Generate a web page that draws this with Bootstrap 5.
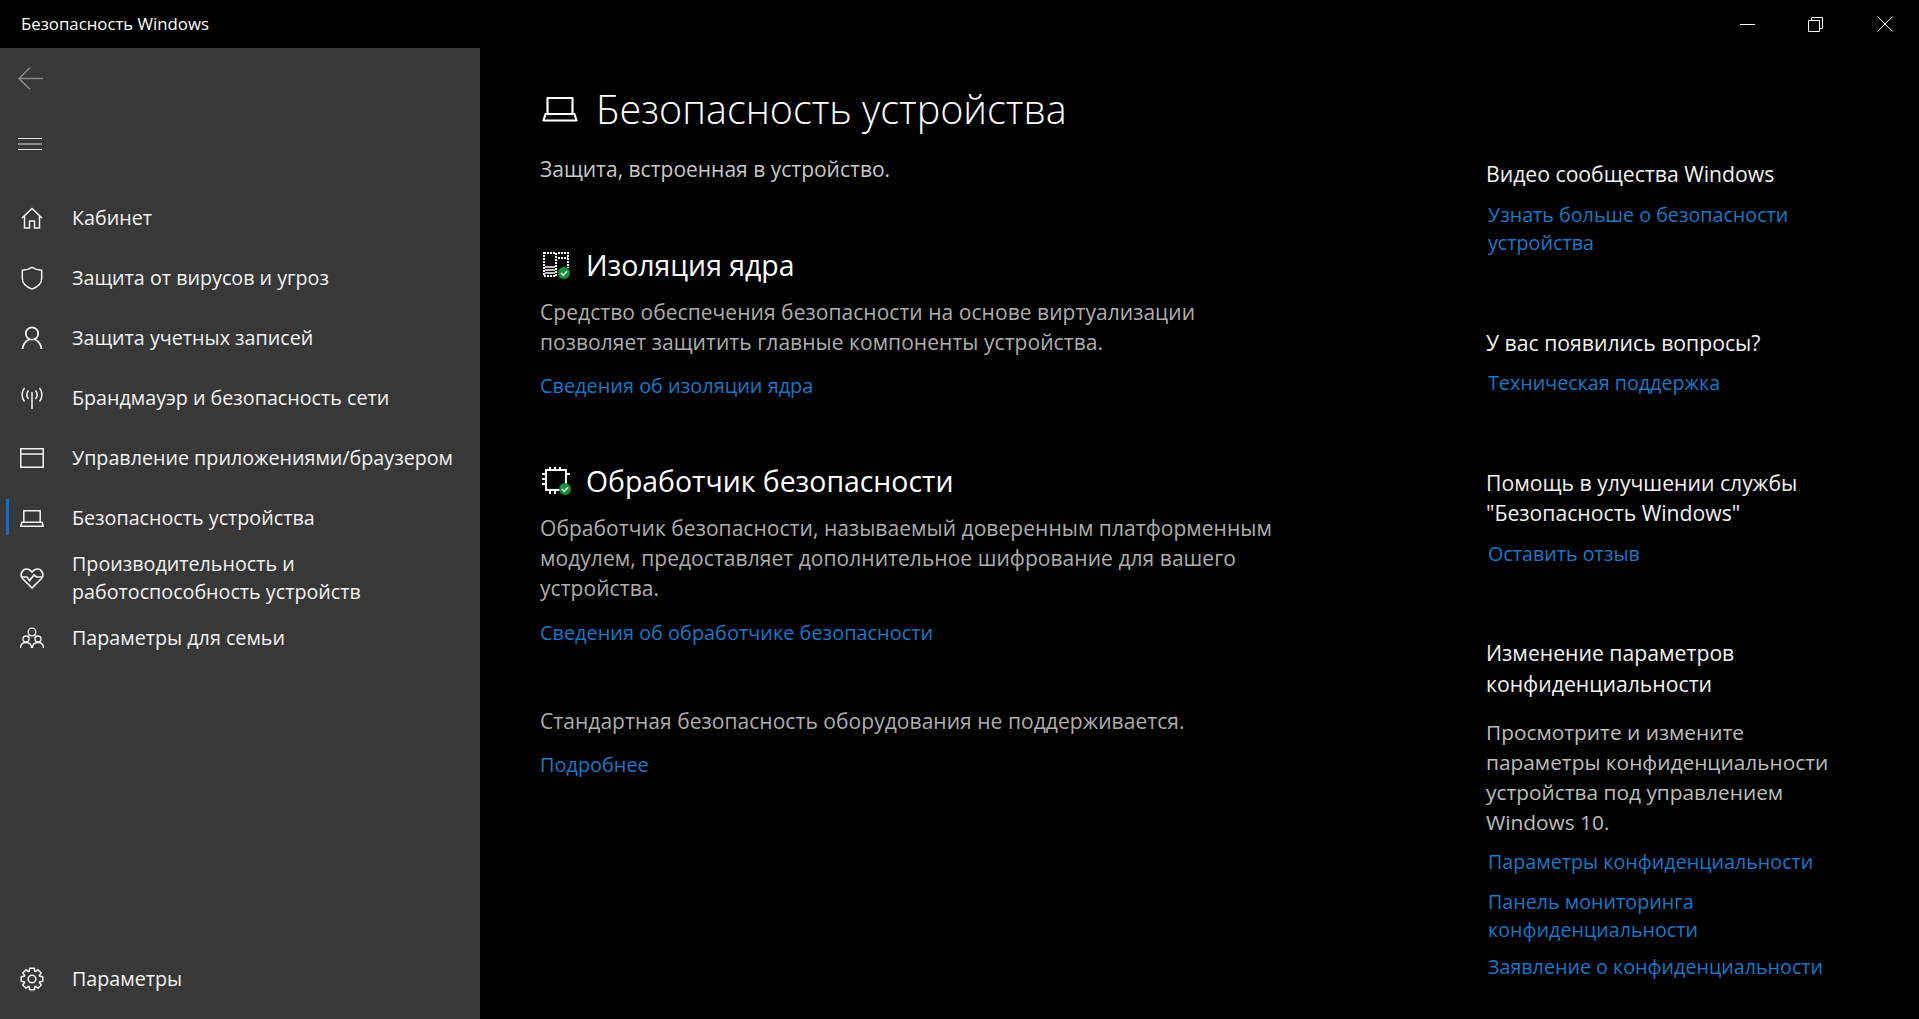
<!DOCTYPE html>
<html lang="ru">
  <head>
    <meta charset="UTF-8" />
    <title>Безопасность Windows</title>
    <link href="https://cdn.jsdelivr.net/npm/bootstrap@5.3.3/dist/css/bootstrap.min.css" rel="stylesheet"/>
    <style>
      html, body { height: 100%; }
      body {
        background: #000;
        color: #fff;
        font-family: "Open Sans", "Noto Sans", sans-serif;
        overflow: hidden;
      }
      a { text-decoration: none; }
      .app-shell { height: 1019px; }
      .title-bar { height: 48px; background: #000; font-size: 16.8px; padding-left: 21px; }
      .win-btn { width: 69px; height: 48px; }
      .side-pane { width: 480px; background: #383838; flex-shrink: 0; height: 971px; }
      .side-top { height: 140px; padding: 17px 0 0 18px; }
      .back-row { height: 65px; }
      .nav-item-row {
        height: 60px;
        color: #f2f2f2;
        font-size: 19.7px;
        line-height: 28px;
        padding: 0 0 0 20px;
        position: relative;
      }
      .nav-item-row.is-active::before {
        content: "";
        position: absolute;
        left: 6px; top: 11px;
        width: 3px; height: 36px;
        background: #0b6fce;
      }
      .nav-ico { width: 24px; margin-right: 28px; flex-shrink: 0; }
      .side-bottom { height: 76px; margin-top: auto; padding-bottom: 4px; }
      .main-pane { width: 1000px; padding: 37px 0 0 60px; flex-shrink: 0; }
      .title-ico { margin: 0 18px 0 2px; }
      .page-title { font-size: 39.5px; font-weight: 300; line-height: 48px; margin: 0; }
      .page-sub { font-size: 21px; color: #c8c8c8; margin: 21px 0 63px; line-height: 30px; }
      .sec-ico { margin: 0 14px 0 2px; }
      .sec-title { font-size: 28.4px; font-weight: 400; line-height: 36px; margin: 0; }
      .sec-text { font-size: 21px; letter-spacing: .05px; line-height: 30.2px; color: #aeaeae; margin: 14px 0 0; width: 740px; }
      .sec-link, .help-link { color: #1a78c8; display: block; font-size: 19.9px; line-height: 28.5px; }
      .sec-link { margin-top: 15px; }
      .sec-next { margin-top: 62px; }
      .sec-plain { margin-top: 59px; }
      .help-pane { padding: 111px 0 0 6px; width: 357px; }
      .help-title { font-size: 21.2px; line-height: 30.5px; font-weight: 400; margin: 70px 0 0; color: #f2f2f2; }
      .help-title:first-child { margin-top: 0; }
      .help-text { font-size: 20.85px; line-height: 30px; color: #bdbdbd; margin: 18px 0 10px; }
      .help-link { font-size: 19.7px; margin: 11px 0 0 2px; }
      .help-link-tight { margin-top: 8px; }
    </style>
  </head>
  <body>
    <div class="app-shell d-flex flex-column">
      <div class="title-bar d-flex align-items-center justify-content-between">
        <span>Безопасность Windows</span>
        <div class="d-flex">
          <div class="win-btn d-flex align-items-center justify-content-center">
            <svg width="16" height="16" viewBox="0 0 16 16"><path d="M1 8.5h15" stroke="#fff" fill="none"/></svg>
          </div>
          <div class="win-btn d-flex align-items-center justify-content-center">
            <svg width="16" height="16" viewBox="0 0 16 16" fill="none" stroke="#fff"><path d="M.5 4.5h11v11H.5z"/><path d="M3.5 4.5v-3h11v11h-3"/></svg>
          </div>
          <div class="win-btn d-flex align-items-center justify-content-center">
            <svg width="16" height="16" viewBox="0 0 16 16" fill="none" stroke="#fff"><path d="M.5.5l15 15M15.500.5l-15 15"/></svg>
          </div>
        </div>
      </div>
      <div class="d-flex flex-grow-1">
        <nav class="side-pane d-flex flex-column">
          <div class="side-top">
            <div class="back-row">
              <svg width="26" height="24" viewBox="0 0 26 24" fill="none" stroke="#8a8a8a" stroke-width="1.5"><path d="M1 11.500h24M12 .7L1 11.500l11 10.800"/></svg>
            </div>
            <svg width="24" height="12" viewBox="0 0 24 12" stroke="#e6e6e6" fill="none"><path d="M0 .5h24M0 6h24M0 11.500h24"/></svg>
          </div>
          <a class="nav-item-row d-flex align-items-center">
            <span class="nav-ico d-flex justify-content-center"><svg width="22" height="22" viewBox="0 0 22 22" fill="none" stroke="#f2f2f2" stroke-width="1.500"><path d="M1 11L11 1.500 21 11M3.500 9v12h5v-7h5v7h5V9"/></svg></span>
            <span>Кабинет</span>
          </a>
          <a class="nav-item-row d-flex align-items-center">
            <span class="nav-ico d-flex justify-content-center"><svg width="24" height="24" viewBox="0 0 24 26" fill="none" stroke="#f2f2f2" stroke-width="1.600"><path d="M12 1.500c3 2 6.500 3 10.500 3v9c0 5-4 9-10.500 11.500C5.500 22.500 1.500 18.500 1.500 13.500v-9c4 0 7.500-1 10.500-3z"/></svg></span>
            <span>Защита от вирусов и угроз</span>
          </a>
          <a class="nav-item-row d-flex align-items-center">
            <span class="nav-ico d-flex justify-content-center"><svg width="22" height="24" viewBox="0 0 22 24" fill="none" stroke="#f2f2f2" stroke-width="1.800"><circle cx="11" cy="7.500" r="6.200"/><path d="M1.500 23c.5-5 3.500-8 6.500-9.500M20.500 23c-.5-5-3.500-8-6.500-9.500"/></svg></span>
            <span>Защита учетных записей</span>
          </a>
          <a class="nav-item-row d-flex align-items-center">
            <span class="nav-ico d-flex justify-content-center"><svg width="24" height="22" viewBox="0 0 24 22" fill="none" stroke="#f2f2f2" stroke-width="1.500"><path d="M12 5v17"/><path d="M8.500 2.500c-2 2.500-2 6 0 8.500M15.500 2.500c2 2.500 2 6 0 8.500M4.500 0C1.300 3.500 1.300 10 4.500 13.500M19.500 0c3.200 3.500 3.200 10 0 13.500" transform="translate(0 1)"/></svg></span>
            <span>Брандмауэр и безопасность сети</span>
          </a>
          <a class="nav-item-row d-flex align-items-center">
            <span class="nav-ico d-flex justify-content-center"><svg width="24" height="20" viewBox="0 0 24 20" fill="none" stroke="#f2f2f2" stroke-width="1.500"><path d="M.8.8h22.400v18.400H.8zM.8 6h22.400"/></svg></span>
            <span>Управление приложениями/браузером</span>
          </a>
          <a class="nav-item-row is-active d-flex align-items-center">
            <span class="nav-ico d-flex justify-content-center"><svg width="24" height="17" viewBox="0 0 24 17" fill="none" stroke="#f2f2f2" stroke-width="1.500"><path d="M3.800 12V.8h16.400V12M.8 16.200h22.400l-1-4H1.800z" stroke-linejoin="round"/></svg></span>
            <span>Безопасность устройства</span>
          </a>
          <a class="nav-item-row d-flex align-items-center">
            <span class="nav-ico d-flex justify-content-center"><svg width="24" height="22" viewBox="0 0 24 22" fill="none" stroke="#f2f2f2" stroke-width="1.700"><path d="M12 21L2.500 11.500C-.5 8 2 2 6.500 2c2.500 0 4 1 5.500 3 1.500-2 3-3 5.500-3C22 2 24.500 8 21.500 11.500z"/><path d="M1 10h6l2.500 3.500L14 8l2.500 2H23"/></svg></span>
            <span>Производительность и<br>работоспособность устройств</span>
          </a>
          <a class="nav-item-row d-flex align-items-center">
            <span class="nav-ico d-flex justify-content-center"><svg width="24" height="22" viewBox="0 0 24 22" fill="none" stroke="#f2f2f2" stroke-width="1.300"><circle cx="12" cy="5" r="3.800"/><circle cx="6" cy="12" r="3"/><circle cx="18" cy="12" r="3"/><path d="M.5 21c0-3.500 2-5.500 5.500-5.500s5.500 2 5.500 5.500M12.500 21c0-3.500 2-5.500 5.500-5.500s5.500 2 5.500 5.500M9 8c-.5 1-.5 2 0 3M15 8c.5 1 .5 2 0 3"/></svg></span>
            <span>Параметры для семьи</span>
          </a>
          <a class="nav-item-row side-bottom d-flex align-items-center">
            <span class="nav-ico d-flex justify-content-center"><svg width="24" height="24" viewBox="0 0 24 24" fill="none" stroke="#f2f2f2" stroke-width="1.500"><circle cx="12" cy="12" r="3.800"/><path d="M9.200 4.290L9.710 1.240H14.290L14.800 4.290L15.470 4.570L17.990 2.770L21.230 6.010L19.430 8.530L19.710 9.200L22.760 9.710V14.290L19.710 14.800L19.430 15.470L21.230 17.990L17.990 21.230L15.470 19.430L14.800 19.710L14.290 22.760H9.710L9.200 19.710L8.530 19.430L6.010 21.230L2.770 17.990L4.570 15.470L4.290 14.800L1.240 14.290V9.710L4.290 9.200L4.570 8.530L2.770 6.010L6.010 2.770L8.530 4.570Z" stroke-linejoin="round"/></svg></span>
            <span>Параметры</span>
          </a>
        </nav>
        <main class="main-pane">
          <div class="d-flex align-items-center">
            <svg class="title-ico" width="36" height="26" viewBox="0 0 36 26" fill="none" stroke="#fff" stroke-width="2.200"><path d="M5.500 18V2h25v16M1.500 24.500h33l-2-6.500h-29z" stroke-linejoin="round"/></svg>
            <h1 class="page-title">Безопасность устройства</h1>
          </div>
          <p class="page-sub">Защита, встроенная в устройство.</p>

          <div class="d-flex align-items-center">
            <svg class="sec-ico" width="30" height="28" viewBox="0 0 30 28" fill="none">
              <g stroke="#fff" stroke-width="2" stroke-dasharray="2 1"><path d="M2 2h12v23H2zM16 2h10v15M16 7h10"/></g>
              <path d="M3 16h10M3 19h10M3 22h10" stroke="#fff" stroke-width="1.500"/>
              <circle cx="22" cy="22" r="6" fill="#17913a"/><path d="M19 22l2.200 2.200 3.800-4" stroke="#fff" stroke-width="1.500" fill="none"/>
            </svg>
            <h2 class="sec-title">Изоляция ядра</h2>
          </div>
          <p class="sec-text">Средство обеспечения безопасности на основе виртуализации позволяет защитить главные компоненты устройства.</p>
          <a class="sec-link">Сведения об изоляции ядра</a>

          <div class="d-flex align-items-center sec-next">
            <svg class="sec-ico" width="30" height="28" viewBox="0 0 30 28" fill="none">
              <path d="M4 3h20v20H4z" stroke="#fff" stroke-width="2"/><path d="M8 0v3M13 0v3M18 0v3M8 23v4M13 23v4M0 7h4M0 12h4M0 17h4M24 7h4" stroke="#fff" stroke-width="2"/>
              <circle cx="23" cy="22" r="6" fill="#17913a"/><path d="M20 22l2.200 2.200 3.800-4" stroke="#fff" stroke-width="1.500" fill="none"/>
            </svg>
            <h2 class="sec-title">Обработчик безопасности</h2>
          </div>
          <p class="sec-text">Обработчик безопасности, называемый доверенным платформенным модулем, предоставляет дополнительное шифрование для вашего устройства.</p>
          <a class="sec-link">Сведения об обработчике безопасности</a>

          <p class="sec-text sec-plain">Стандартная безопасность оборудования не поддерживается.</p>
          <a class="sec-link">Подробнее</a>
        </main>
        <aside class="help-pane">
          <h3 class="help-title">Видео сообщества Windows</h3>
          <a class="help-link">Узнать больше о безопасности устройства</a>

          <h3 class="help-title">У вас появились вопросы?</h3>
          <a class="help-link">Техническая поддержка</a>

          <h3 class="help-title">Помощь в улучшении службы "Безопасность Windows"</h3>
          <a class="help-link">Оставить отзыв</a>

          <h3 class="help-title">Изменение параметров конфиденциальности</h3>
          <p class="help-text">Просмотрите и измените параметры конфиденциальности устройства под управлением Windows 10.</p>
          <a class="help-link">Параметры конфиденциальности</a>
          <a class="help-link">Панель мониторинга конфиденциальности</a>
          <a class="help-link help-link-tight">Заявление о конфиденциальности</a>
        </aside>
      </div>
    </div>
    <script src="https://cdn.jsdelivr.net/npm/bootstrap@5.3.3/dist/js/bootstrap.bundle.min.js"></script>
  </body>
</html>
